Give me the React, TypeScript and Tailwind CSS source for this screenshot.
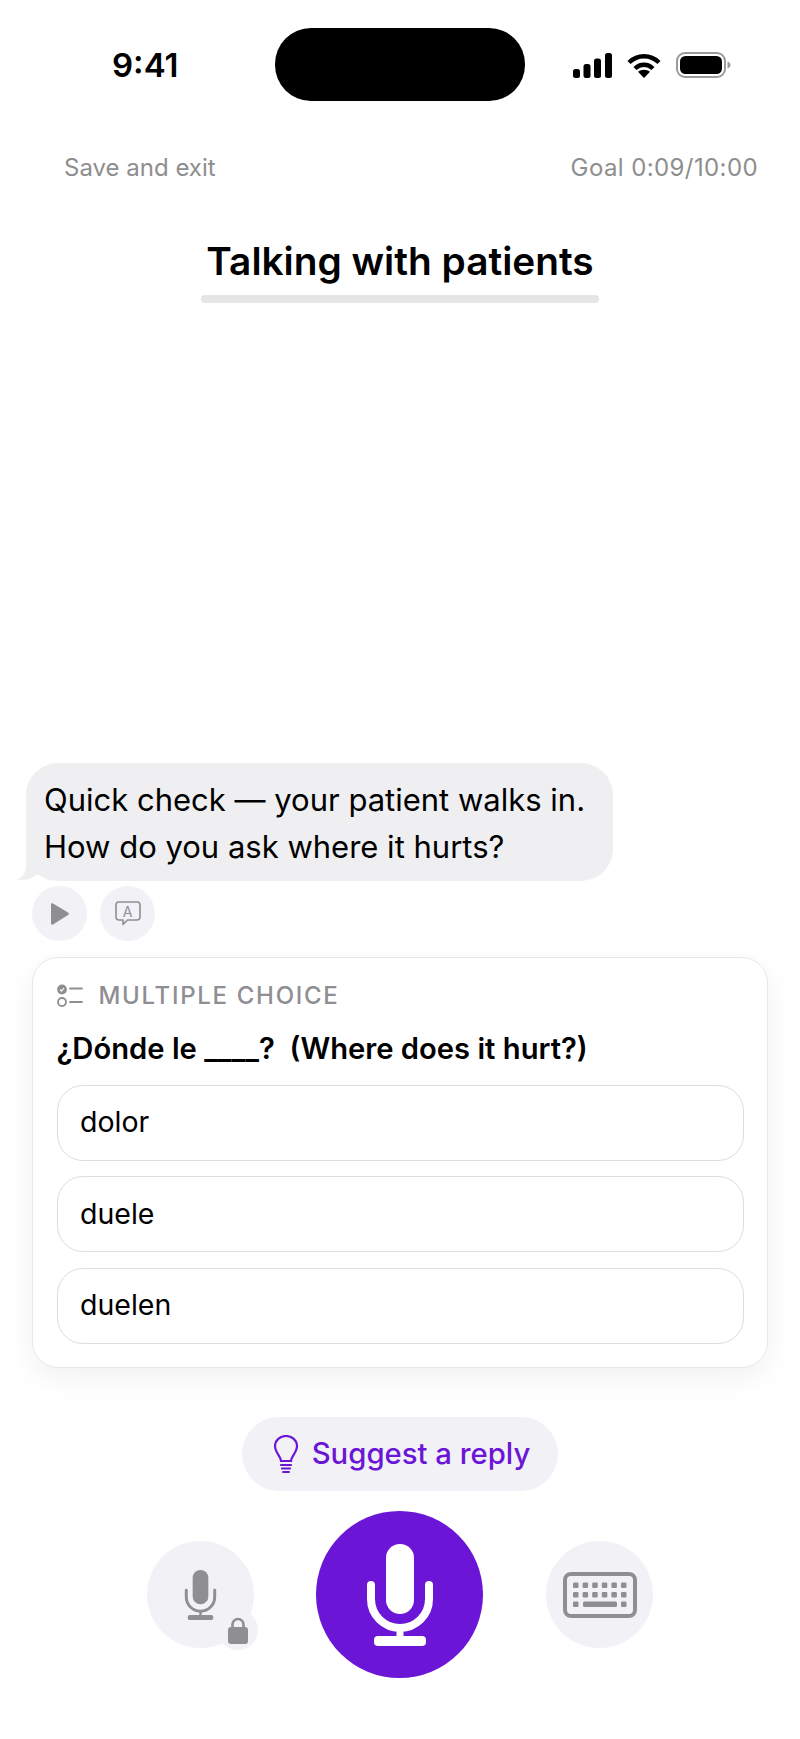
const inter = "font-['Inter','Noto_Sans',sans-serif]";

function SignalIcon() {
  return (
    <svg width="39" height="25" viewBox="0 0 39 25" fill="#000">
      <rect x="0" y="16" width="7" height="9" rx="2.5" />
      <rect x="10.5" y="11" width="7" height="14" rx="2.5" />
      <rect x="21" y="5.5" width="7" height="19.5" rx="2.5" />
      <rect x="32" y="0" width="7" height="25" rx="2.5" />
    </svg>
  );
}

function WifiIcon() {
  return (
    <svg width="34" height="25" viewBox="0 0 34 25" fill="none" stroke="#000" strokeWidth="4.4">
      <path d="M2 9.5C10.5 1.2 23.5 1.2 32 9.5" />
      <path d="M8 15.5C13.2 10.5 20.8 10.5 26 15.5" />
      <path d="M17 25l-6-6.2c3.4-2.8 8.6-2.8 12 0z" fill="#000" stroke="none" />
    </svg>
  );
}

function BatteryIcon() {
  return (
    <svg width="55" height="26" viewBox="0 0 55 26" fill="none">
      <rect x="1" y="1" width="48" height="24" rx="8" stroke="#9a9a9a" strokeWidth="2" />
      <rect x="4" y="4" width="42" height="18" rx="5.5" fill="#000" />
      <path d="M51.5 9.5c2 .6 3 2 3 3.5s-1 2.9-3 3.5z" fill="#9a9a9a" />
    </svg>
  );
}

function ChecklistIcon() {
  return (
    <svg width="26" height="24" viewBox="0 0 26 24" fill="none" stroke="#8e8e93" strokeWidth="1.800">
      <circle cx="5" cy="5.5" r="4" fill="#8e8e93" />
      <path d="M3 5.500l1.600 1.600L7 4" stroke="#fff" strokeWidth="1.200" />
      <circle cx="5" cy="18" r="4" />
      <path d="M13 4.500h12M13 18h12" strokeLinecap="round" />
    </svg>
  );
}

function MicGlyph({ color, width, height, body = 28, stroke = 8 }: { color: string; width: number; height: number; body?: number; stroke?: number }) {
  return (
    <svg width={width} height={height} viewBox="0 0 66 102" fill="none">
      <rect x={33 - body / 2} y="0" width={body} height="70" rx={body / 2} fill={color} />
      <path d="M4 41v14c0 16 13 29 29 29s29-13 29-29V41" stroke={color} strokeWidth={stroke} strokeLinecap="round" />
      <path d="M33 84v12" stroke={color} strokeWidth={stroke - 1} />
      <rect x="7" y="92" width="52" height="10" rx="4" fill={color} />
    </svg>
  );
}

function KeyboardIcon() {
  const keys = [0, 1, 2, 3, 4, 5];
  return (
    <svg width="74" height="46" viewBox="0 0 74 46" fill="none">
      <rect x="2" y="2" width="70" height="42" rx="6" stroke="#8e8e93" strokeWidth="4" />
      {keys.map((k) => (
        <rect key={`a${k}`} x={10 + k * 9.6} y="10.500" width="5.500" height="5.500" rx="1.200" fill="#8e8e93" />
      ))}
      {keys.map((k) => (
        <rect key={`b${k}`} x={10 + k * 9.6} y="20" width="5.500" height="5.500" rx="1.200" fill="#8e8e93" />
      ))}
      <rect x="10" y="29.500" width="5.500" height="5.500" rx="1.200" fill="#8e8e93" />
      <rect x="20" y="29.500" width="34" height="5.500" rx="1.500" fill="#8e8e93" />
      <rect x="58" y="29.500" width="5.500" height="5.500" rx="1.200" fill="#8e8e93" />
    </svg>
  );
}

function Option({ label }: { label: string }) {
  return (
    <div className="h-[76px] rounded-[26px] border-[1.5px] border-[#dedee0] bg-white pl-[22.5px] flex items-center text-[28.5px] text-black">
      {label}
    </div>
  );
}

export default function App() {
  return (
    <div className={`${inter} w-[800px] h-[1739px] bg-white flex flex-col overflow-hidden`}>
      {/* status bar */}
      <div className="pt-[28px] pl-[112px] flex items-start">
        <div className="w-[163px] h-[73px] pt-[2px] flex items-center text-[33px] leading-none font-semibold text-black">9:41</div>
        <div className="w-[250px] h-[73px] rounded-[36px] bg-black" />
        <div className="ml-[48px] h-[73px] pt-[1px] flex items-center gap-[15px]">
          <SignalIcon />
          <WifiIcon />
          <BatteryIcon />
        </div>
      </div>

      <div className="mt-[53px] pl-[64px] pr-[42px] flex justify-between text-[24px] leading-[28px] text-[#8e8e8e]">
        <span>Save and exit</span>
        <span className="tracking-[0.4px]">Goal 0:09/10:00</span>
      </div>

      <h1 className="mt-[56px] text-center text-[38.8px] leading-[46px] font-semibold text-black">Talking with patients</h1>
      <div className="mt-[11px] mx-auto w-[398px] h-[8px] rounded-full bg-[#e5e5e5]" />

      <div className="mt-auto pb-[61px] flex flex-col">
        {/* tutor message */}
        <div className="ml-[26px] relative w-[587px] rounded-[32px] bg-[#efeff1] px-[18px] pt-[13px] pb-[11px] text-[31px] leading-[47px] text-black">
          <svg className="absolute left-[-10px] bottom-0" width="34" height="24" viewBox="0 0 34 24" fill="#efeff1">
            <path d="M10 0v10C10 16 6 21 0 22.5 9 24 16 22 22 17l12 7V0z" />
          </svg>
          <p className="relative">Quick check — your patient walks in.</p>
          <p className="relative">How do you ask where it hurts?</p>
        </div>

        <div className="mt-[5px] ml-[32px] flex gap-[13px]">
          <div className="w-[55px] h-[55px] rounded-full bg-[#f2f1f6] flex items-center justify-center">
            <svg width="18" height="22" viewBox="0 0 18 22" fill="#8e8e93" className="ml-[1px]">
              <path d="M0 1.500C0 .5 1 0 2 .5l15 9c1 .6 1 2 0 2.600l-15 9.400c-1 .5-2 0-2-1z" />
            </svg>
          </div>
          <div className="w-[55px] h-[55px] rounded-full bg-[#f2f1f6] relative flex items-center justify-center">
            <svg width="26" height="25" viewBox="0 0 26 25" fill="none" stroke="#8e8e93" strokeWidth="1.600" strokeLinejoin="round">
              <path d="M4 1h18a3 3 0 0 1 3 3v12a3 3 0 0 1-3 3H12.500l-4.500 4.500V19H4a3 3 0 0 1-3-3V4a3 3 0 0 1 3-3z" />
            </svg>
            <span className="absolute inset-0 flex items-center justify-center pb-[4px] text-[14px] leading-none text-[#8e8e93]">A</span>
          </div>
        </div>

        {/* multiple choice card */}
        <div className="mt-[16px] mx-[32px] rounded-[26px] border-[1.5px] border-[#e8e8e8] bg-white pt-[23px] pb-[23.5px] px-[23.5px] shadow-[0_10px_30px_rgba(0,0,0,0.06)]">
          <div className="flex items-center gap-[16px] h-[30px]">
            <ChecklistIcon />
            <span className="text-[24px] leading-[30px] font-medium tracking-[1.7px] text-[#8e8e93]">MULTIPLE CHOICE</span>
          </div>
          <p className="mt-[20px] text-[29.2px] leading-[36px] font-semibold text-black whitespace-pre">¿Dónde le ____?  (Where does it hurt?)</p>
          <div className="mt-[17.5px] flex flex-col gap-[15.5px]">
            <Option label="dolor" />
            <Option label="duele" />
            <Option label="duelen" />
          </div>
        </div>

        {/* suggest a reply */}
        <div className="mt-[49px] mx-auto w-[316px] h-[74px] rounded-[37px] bg-[#f2f1f6] pl-[4px] flex items-center justify-center gap-[14px] text-[29.3px] font-medium text-[#6b16d6]">
          <svg width="24" height="38" viewBox="0 0 24 38" fill="none" stroke="#6b16d6" strokeWidth="2.200" strokeLinecap="round">
            <path d="M7 26c0-5-6-8-6-15a11 10 0 0 1 22 0c0 7-6 10-6 15z" />
            <path d="M7 30h10M8 33.500h8" />
            <path d="M9 37h6" strokeWidth="2" />
          </svg>
          <span>Suggest a reply</span>
        </div>

        {/* controls */}
        <div className="mt-[20px] ml-[147px] flex items-center">
          <div className="relative w-[107px] h-[107px] rounded-full bg-[#f2f1f6] flex items-center justify-center">
            <MicGlyph color="#8e8e93" width={33} height={50} body={32} stroke={6} />
            <div className="absolute left-[71px] top-[69px] w-[40px] h-[40px] rounded-full bg-[#f2f1f6] flex items-center justify-center">
              <svg width="20" height="27" viewBox="0 0 20 27" fill="none">
                <path d="M4.500 12V7.500a5.500 5.500 0 0 1 11 0V12" stroke="#8e8e93" strokeWidth="2.600" />
                <rect x="0" y="10" width="20" height="17" rx="3" fill="#8e8e93" />
              </svg>
            </div>
          </div>
          <div className="ml-[62px] w-[167px] h-[167px] rounded-full bg-[#6b16d6] flex items-center justify-center">
            <MicGlyph color="#fff" width={66} height={102} />
          </div>
          <div className="ml-[63px] w-[107px] h-[107px] rounded-full bg-[#f2f1f6] flex items-center justify-center">
            <KeyboardIcon />
          </div>
        </div>
      </div>
    </div>
  );
}
